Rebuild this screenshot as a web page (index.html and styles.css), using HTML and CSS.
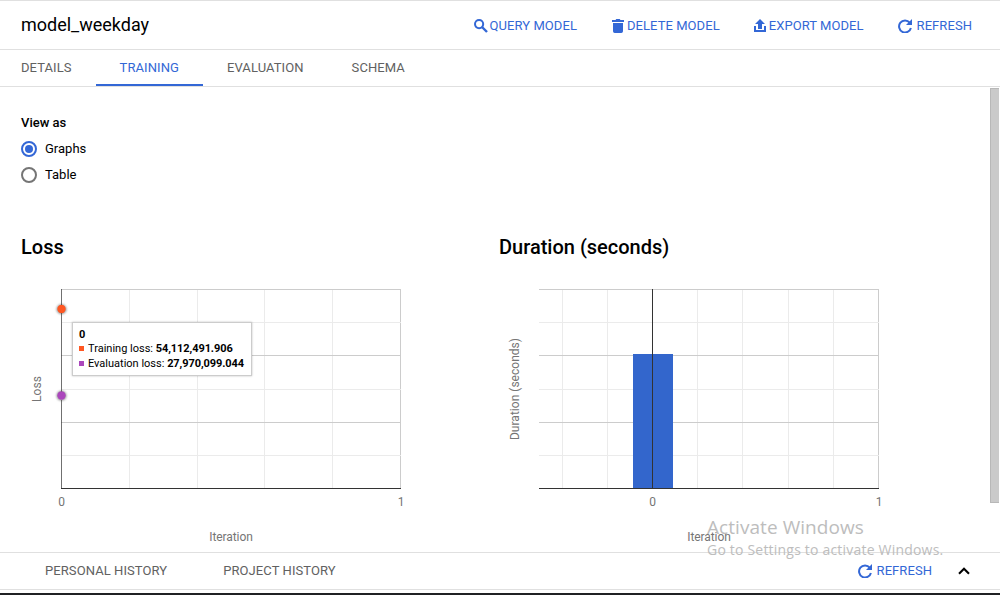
FILE: index.html
```html
<!DOCTYPE html>
<html lang="en">
<head>
<meta charset="utf-8">
<title>model_weekday</title>
<link rel="stylesheet" href="styles.css">
</head>
<body>
<svg class="defs" width="0" height="0">
  <symbol id="refresh" viewBox="0 0 14 14"><path d="M11.7 3.6A6 6 0 1 0 12.9 8.9" fill="none" stroke="currentColor" stroke-width="2"/><path d="M14 0v6H8z" fill="currentColor"/></symbol>
</svg>
<div class="app">
  <header class="topbar">
    <h1 class="model-name">model_weekday</h1>
    <nav class="actions">
      <a class="action query"><svg width="14" height="14" viewBox="0 0 14 14"><circle cx="5.1" cy="5.1" r="4.1" fill="none" stroke="currentColor" stroke-width="2"/><path d="M8 8l5 5" stroke="currentColor" stroke-width="2.4"/></svg><span>QUERY MODEL</span></a>
      <a class="action delete"><svg width="12" height="14" viewBox="0 0 12 14"><path d="M0 1h3.5l.8-1h3.4l.8 1H12v2H0zM1 4h10v8.3A1.7 1.7 0 0 1 9.3 14H2.7A1.7 1.7 0 0 1 1 12.3z" fill="currentColor"/></svg><span>DELETE MODEL</span></a>
      <a class="action export"><svg width="12" height="14" viewBox="0 0 12 14"><path d="M6 0l5 5H8v5H4V5H1zM0 7h2v4h8V7h2v6H0z" fill="currentColor"/></svg><span>EXPORT MODEL</span></a>
      <a class="action refresh"><svg width="14" height="14"><use href="#refresh"/></svg><span>REFRESH</span></a>
    </nav>
  </header>
  <nav class="tabs">
    <a class="tab">DETAILS</a>
    <a class="tab active">TRAINING</a>
    <a class="tab">EVALUATION</a>
    <a class="tab">SCHEMA</a>
  </nav>
  <main class="content">
    <section class="view-as">
      <h2 class="view-label">View as</h2>
      <label class="option"><span class="radio checked"></span>Graphs</label>
      <label class="option"><span class="radio"></span>Table</label>
    </section>
    <section class="charts">
      <article class="chart">
        <h2 class="chart-title">Loss</h2>
        <svg class="plot" width="478" height="282" viewBox="0 270 478 282">
          <g class="minor"><path d="M129.5 290v198M197.5 290v198M264.5 290v198M332.5 290v198"/></g>
          <g class="major"><path d="M61 289.5h340M61 355.5h340M61 422.5h340M400.5 289v199"/></g>
          <g class="minor"><path d="M62 322.5h339M62 389.5h339M62 455.5h339"/></g>
          <path class="axis" d="M61 488.5h340"/>
          <circle class="halo" cx="61.5" cy="309.3" r="5"/>
          <circle class="halo" cx="61.5" cy="395.8" r="5"/>
          <circle class="training" cx="61.5" cy="309" r="4.2"/>
          <circle class="evaluation" cx="61.5" cy="395.5" r="4.2"/>
          <path class="cursor" d="M61.5 289v16M61.5 313v78.5M61.5 400v89"/>
          <text x="61.5" y="506" text-anchor="middle">0</text>
          <text x="401" y="506" text-anchor="middle">1</text>
          <text x="209.3" y="541" textLength="43.5">Iteration</text>
          <text transform="translate(41 402) rotate(-90)" textLength="26">Loss</text>
        </svg>
        <div class="tooltip">
          <b class="tooltip-title">0</b>
          <div><i class="key training-key"></i>Training loss: <b>54,112,491.906</b></div>
          <div><i class="key evaluation-key"></i>Evaluation loss: <b>27,970,099.044</b></div>
        </div>
      </article>
      <article class="chart">
        <h2 class="chart-title">Duration (seconds)</h2>
        <svg class="plot" width="478" height="282" viewBox="478 270 478 282">
          <g class="minor"><path d="M562.5 290v198M607.5 290v198M697.5 290v198M742.5 290v198M788.5 290v198M833.5 290v198"/></g>
          <g class="major"><path d="M539 289.5h340M539 355.5h340M539 422.5h340M878.5 289v199"/></g>
          <g class="minor"><path d="M539 322.5h340M539 389.5h340M539 455.5h340"/></g>
          <rect class="bar" x="633" y="354" width="40" height="134"/>
          <path class="axis" d="M539 488.5h340M652.5 289v200"/>
          <text x="652.7" y="506" text-anchor="middle">0</text>
          <text x="879" y="506" text-anchor="middle">1</text>
          <text x="687.3" y="541" textLength="43.5">Iteration</text>
          <text transform="translate(519 440) rotate(-90)" textLength="102">Duration (seconds)</text>
        </svg>
      </article>
    </section>
    <div class="scroll-thumb"></div>
  </main>
  <footer class="history">
    <a class="tab personal">PERSONAL HISTORY</a>
    <a class="tab project">PROJECT HISTORY</a>
    <a class="action refresh"><svg width="14" height="14"><use href="#refresh"/></svg><span>REFRESH</span></a>
    <svg class="chevron" width="12" height="8" viewBox="0 0 12 8"><path d="M1 6.7L6 1.7l5 5" fill="none" stroke="currentColor" stroke-width="2.1"/></svg>
  </footer>
  <div class="taskbar"></div>
  <div class="watermark"><p class="wm-title">Activate Windows</p><p class="wm-text">Go to Settings to activate Windows.</p></div>
</div>
</body>
</html>
```
FILE: styles.css
```css
* { box-sizing: border-box; }
body { margin: 0; background: #fff; color: #000; font: 13px/16px Roboto, sans-serif; overflow: hidden; }
h1, h2, p { margin: 0; font-weight: 400; }
svg { display: block; flex: none; }
.defs { position: absolute; }
.app { position: relative; width: 1000px; height: 595px; display: flex; flex-direction: column; }
.topbar { height: 50px; flex: none; display: flex; align-items: center; justify-content: space-between; padding: 0 28px 0 21px; border-top: 1px solid #e0e0e0; border-bottom: 1px solid #e0e0e0; }
.model-name { font-size: 18px; line-height: 24px; }
.actions { display: flex; padding-top: 1px; }
.action { display: flex; align-items: center; color: #3367d6; font-weight: 450; letter-spacing: .06px; white-space: nowrap; }
.query { gap: 2px; margin-right: 35px; }
.delete { gap: 3px; margin-right: 34px; }
.export { gap: 3px; margin-right: 34px; }
.refresh { gap: 5px; }
.tabs { height: 37px; flex: none; display: flex; border-bottom: 1px solid #e0e0e0; padding-right: 20px; }
.tab { color: #616161; font-weight: 450; letter-spacing: .08px; white-space: nowrap; }
.tabs .tab { height: 36px; padding: 10px 24px 0; }
.tabs .tab:first-child { padding-left: 21px; }
.tabs .active { color: #3367d6; border-bottom: 2px solid #3367d6; }
.content { position: relative; height: 465px; flex: none; overflow: hidden; }
.view-as { padding: 27px 0 0 21px; height: 139px; }
.view-label { font-weight: 500; font-size: 13px; line-height: 18px; }
.option { display: flex; align-items: center; gap: 8px; height: 26px; }
.view-label + .option { margin-top: 4px; }
.radio { width: 16px; height: 16px; border: 2px solid #757575; border-radius: 50%; display: grid; place-items: center; }
.checked { border-color: #3367d6; }
.checked::after { content: ""; width: 8px; height: 8px; border-radius: 50%; background: #3367d6; }
.charts { display: grid; grid-template-columns: 478px 478px; }
.chart { position: relative; }
.chart-title { height: 44px; padding: 9px 0 0 21px; font-size: 20px; line-height: 24px; font-weight: 500; }
.plot text { font: 12px Roboto, sans-serif; fill: #757575; }
.minor { stroke: #ebebeb; }
.major { stroke: #ccc; }
.axis { stroke: #333; }
.cursor { stroke: #333; stroke-opacity: .7; }
.bar { fill: #3366cc; }
.halo { fill: #000; fill-opacity: .4; filter: blur(1.2px); }
.training { fill: #ff5722; }
.evaluation { fill: #ab47bc; }
.tooltip { position: absolute; left: 72px; top: 96px; width: 180px; height: 54px; padding: 4px 6px; background: #fff; border: 1px solid #ccc; box-shadow: 0 0 2px rgba(0,0,0,.25); font: 11px/15px Roboto, sans-serif; white-space: nowrap; }
.tooltip b { font-weight: 700; letter-spacing: -.08px; }
.tooltip-title { display: block; height: 14px; }
.key { display: inline-block; width: 5px; height: 5px; margin-right: 4px; vertical-align: 1px; }
.training-key { background: #ff5722; }
.evaluation-key { background: #ab47bc; }
.scroll-thumb { position: absolute; left: 990px; top: 1px; width: 9px; height: 415px; background: #cacaca; border: 1px solid #b8b8b8; border-right: 0; }
.history { height: 38px; flex: none; display: flex; align-items: center; border-top: 1px solid #e0e0e0; border-bottom: 1px solid #e0e0e0; padding: 0 30px 0 45px; }
.personal { margin-right: 56px; }
.history .refresh { margin-left: auto; margin-right: 26px; }
.chevron { color: #000; }
.taskbar { margin-top: auto; height: 2px; background: #202124; }
.watermark { position: absolute; left: 707px; top: 514px; color: #bdbdbd; font-family: "Open Sans", sans-serif; white-space: nowrap; }
.wm-title { font-size: 19px; line-height: 26px; letter-spacing: .06px; }
.wm-text { font-size: 14px; line-height: 20px; letter-spacing: .2px; }
```
